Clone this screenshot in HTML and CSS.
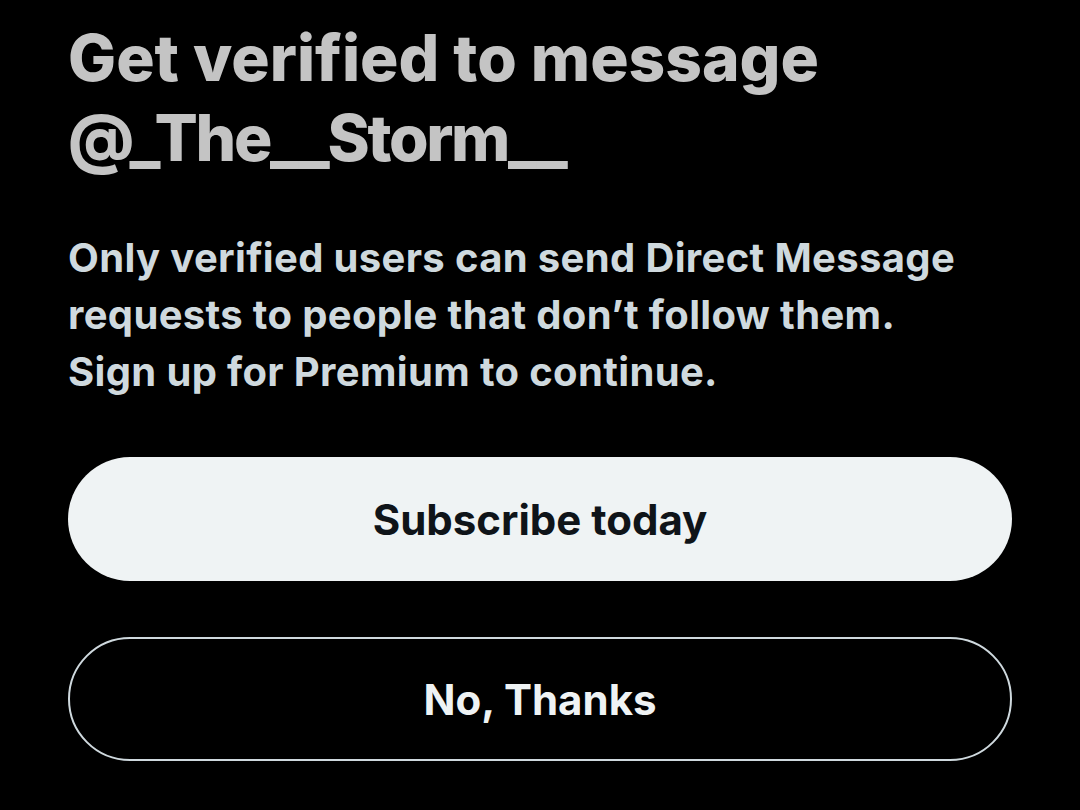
FILE: index.html
```html
<!DOCTYPE html>
<html lang="en">
<head>
<meta charset="utf-8">
<title>Get verified</title>
<link rel="stylesheet" href="styles.css">
</head>
<body>
<main class="sheet">
  <h1 class="title">Get verified to message<br><span class="handle">@_The__Storm__</span></h1>
  <p class="desc">Only verified users can send Direct Message<br>requests to people that don’t follow them.<br>Sign up for Premium to continue.</p>
  <div class="actions">
    <button class="btn btn-primary">Subscribe today</button>
    <button class="btn btn-outline">No, Thanks</button>
  </div>
</main>
</body>
</html>
```
FILE: styles.css
```css
html, body {
  margin: 0;
  padding: 0;
  background: #000;
}
body {
  width: 1080px;
  height: 810px;
  overflow: hidden;
  font-family: "Inter", "Lato", "Liberation Sans", sans-serif;
}
.sheet {
  padding: 18px 68px 0 68px;
  display: flex;
  flex-direction: column;
}
.title {
  margin: 0;
  color: #c4c4c4;
  font-size: 64px;
  font-weight: 800;
  line-height: 80px;
  letter-spacing: 0;
}
.handle {
  letter-spacing: -2.3px;
}
.desc {
  margin: 51px 0 0 0;
  color: #cfd9de;
  font-size: 40px;
  font-weight: 700;
  line-height: 57px;
  letter-spacing: 0.35px;
  white-space: nowrap;
}
.actions {
  margin-top: 57px;
  display: flex;
  flex-direction: column;
  gap: 56px;
}
.btn {
  width: 944px;
  height: 124px;
  border-radius: 62px;
  font-family: inherit;
  font-size: 42px;
  font-weight: 700;
  cursor: pointer;
}
.btn-primary {
  background: #eff3f4;
  color: #0f1419;
  border: none;
}
.btn-outline {
  background: #000;
  color: #eff3f4;
  border: 2px solid #cfd9de;
}
```
